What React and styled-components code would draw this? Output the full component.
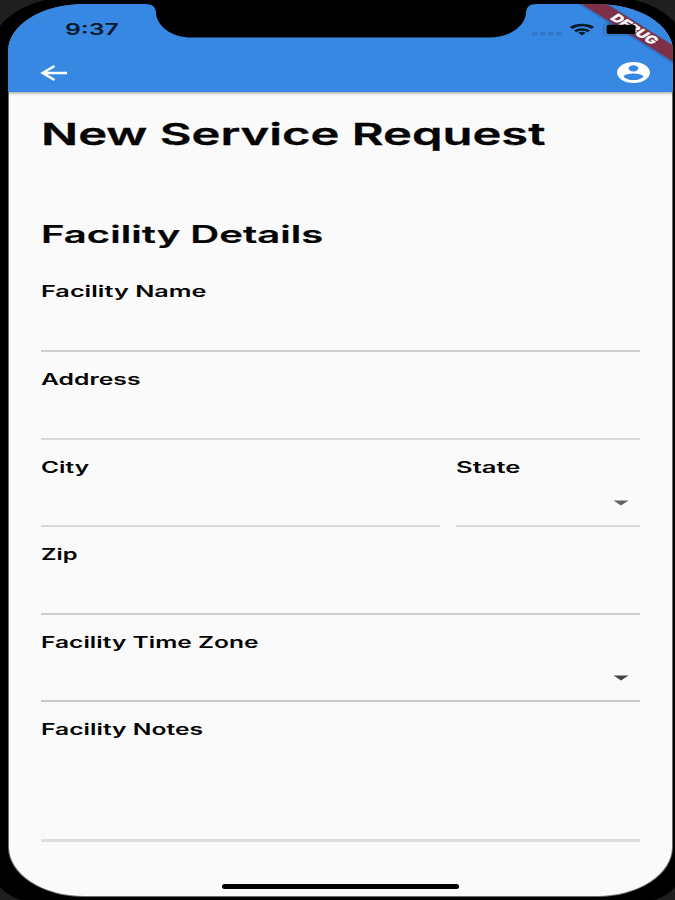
import React from "react";
import styled, { createGlobalStyle } from "styled-components";

const Global = createGlobalStyle`
  * { box-sizing: border-box; }
  body { margin: 0; background: #000; font-family: Inter, "Liberation Sans", sans-serif; color: #050505; }
`;

const Device = styled.div`
  position: relative;
  width: 675px;
  height: 900px;
  overflow: hidden;
  background: #1f1f1f;
`;

const Bezel = styled.div`
  width: 691px;
  height: 908px;
  margin: -4px -8px;
  padding: 8px 10px 7px 16px;
  background: #000;
  border-radius: 86px 80px 52px 52px / 52px 48px 36px 36px;
`;

const Screen = styled.div`
  position: relative;
  display: flex;
  flex-direction: column;
  width: 665px;
  height: 893px;
  overflow: hidden;
  background: #6c6c6c;
  border-radius: 76px / 47px 47px 50px 50px;
`;

const Header = styled.header`
  position: relative;
  flex: none;
  display: flex;
  flex-direction: column;
  height: 88px;
  background: #3788e3;
  box-shadow: 0 1px 3px rgba(0, 0, 0, 0.4);
`;

const StatusBar = styled.div`
  display: flex;
  justify-content: space-between;
  height: 49px;
  padding: 0 32px 0 57px;
`;

const AppBar = styled.div`
  display: flex;
  justify-content: space-between;
  align-items: center;
  height: 39px;
  padding: 0 23px 0 32px;
`;

const Notch = styled.svg`
  position: absolute;
  top: 0;
  left: 137px;
`;

const Overlay = styled.svg`
  position: absolute;
  top: 0;
  right: 0;
`;

const Stretch = styled.span`
  display: block;
  width: max-content;
  white-space: nowrap;
  transform: scaleX(${(p) => p.$x});
  transform-origin: 0 50%;
`;

const Clock = styled.div`
  padding-top: 15px;
  font-size: 16px;
  line-height: 21px;
  font-weight: 600;
  color: #08182b;
`;

const Main = styled.main`
  flex: 1;
  display: flex;
  flex-direction: column;
  margin: 0 1px 1px;
  padding: 0 32px;
  background: #fafafa;
  border-radius: 0 0 75px 75px / 0 0 49px 49px;
`;

const Title = styled.h1`
  margin: 24px 0 0;
  height: 100px;
  font-size: 30px;
  line-height: 37px;
  font-weight: 600;
  -webkit-text-stroke: 0.3px #050505;
`;

const Section = styled.h2`
  margin: 0;
  height: 63px;
  font-size: 24px;
  line-height: 38px;
  font-weight: 600;
  -webkit-text-stroke: 0.2px #050505;
`;

const Field = styled.label`
  display: flex;
  flex-direction: column;
  justify-content: space-between;
  height: ${(p) => p.$h || 87.6}px;
  padding-top: ${(p) => (p.$first ? 3 : 18)}px;
  border-bottom: ${(p) => p.$line || 2}px solid ${(p) => p.$tone || "#cecece"};
  font-size: 15.5px;
  line-height: 20px;
  font-weight: 600;
`;

const Row = styled.div`
  display: grid;
  grid-template-columns: 399px 184px;
  gap: 16px;
`;

const Arrow = styled.svg`
  align-self: flex-end;
  margin: 0 11px 19px 0;
`;

const HomeBar = styled.div`
  position: absolute;
  left: 214px;
  bottom: 8px;
  width: 237px;
  height: 5px;
  border-radius: 3px;
  background: #000;
`;

const Caret = ({ color }) => (
  <Arrow width="16" height="6" viewBox="0 0 16 6"><path d="M0.5 0.5H15.5L8 5.5Z" fill={color} /></Arrow>
);

export default function App() {
  return (
    <>
      <Global />
      <Device>
        <Bezel>
          <Screen>
            <Header>
              <StatusBar>
                <Clock><Stretch $x={1.55}>9:37</Stretch></Clock>
              </StatusBar>
              <AppBar>
                <svg width="27" height="18" viewBox="0 0 27 18" fill="none" stroke="#fff" strokeWidth="2.6">
                  <path d="M27 9H3M14.5 2L2.8 9L14.5 16" />
                </svg>
                <svg width="33" height="21" viewBox="2 2 20 20" preserveAspectRatio="none" fill="#fff">
                  <path d="M12 2C6.48 2 2 6.48 2 12s4.48 10 10 10 10-4.48 10-10S17.52 2 12 2zm0 3c1.66 0 3 1.34 3 3s-1.34 3-3 3-3-1.34-3-3 1.34-3 3-3zm0 14.2c-2.5 0-4.71-1.28-6-3.22.03-1.99 4-3.08 6-3.08 1.99 0 5.97 1.09 6 3.08-1.29 1.94-3.5 3.22-6 3.22z" />
                </svg>
              </AppBar>
            </Header>
            <Main>
              <Title><Stretch $x={1.63}>New Service Request</Stretch></Title>
              <Section><Stretch $x={1.67}>Facility Details</Stretch></Section>
              <Field $h={73} $first><Stretch $x={1.63}>Facility Name</Stretch></Field>
              <Field $tone="#d8d8d8"><Stretch $x={1.595}>Address</Stretch></Field>
              <Row>
                <Field $tone="#d8d8d8"><Stretch $x={1.58}>City</Stretch></Field>
                <Field $tone="#d8d8d8"><Stretch $x={1.65}>State</Stretch><Caret color="#626262" /></Field>
              </Row>
              <Field><Stretch $x={1.53}>Zip</Stretch></Field>
              <Field $tone="#c8c8c8"><Stretch $x={1.585}>Facility Time Zone</Stretch><Caret color="#444" /></Field>
              <Field $h={140} $line={3} $tone="#dedede"><Stretch $x={1.59}>Facility Notes</Stretch></Field>
            </Main>
            <Notch width="392" height="34" viewBox="0 0 392 34">
              <path d="M0 0C8 0 11 3 11 10C13 23 27 33.5 47 33.5H344C364 33.5 379 23 381 10C381 3 384 0 392 0Z" fill="#000" />
            </Notch>
            <Overlay width="145" height="60" viewBox="528 4 145 60">
              <g fill="#3077c8">
                <rect x="532" y="32" width="6" height="3.5" rx="1" /><rect x="540" y="32" width="6" height="3.5" rx="1" />
                <rect x="548" y="32" width="6" height="3.5" rx="1" /><rect x="556" y="32" width="6" height="3.5" rx="1" />
              </g>
              <g transform="translate(582 35) scale(1.5 1)" fill="none" stroke="#0a1c30" strokeWidth="2.5">
                <path d="M-7.3 -7A10.6 10.6 0 0 1 7.3 -7M-4.6 -3.7A6.8 6.8 0 0 1 4.6 -3.7" />
                <path d="M0 0.5L-2.5 -2.2A3.8 3.8 0 0 1 2.5 -2.2Z" fill="#0a1c30" stroke="none" />
              </g>
              <path d="M578 4H609L673 45V64Z" fill="#2b5188" opacity="0.35" />
              <path d="M581.5 4H606.5L673 45.5V61.5Z" fill="#7d3048" />
              <rect x="603.5" y="23.8" width="36" height="11.5" rx="3" fill="none" stroke="#1f4d82" strokeWidth="0.8" opacity="0.6" />
              <text transform="translate(630.5 32) scale(1.55 1) rotate(44)" textAnchor="middle" fontSize="11" fontWeight="900" fill="#fff">DEBUG</text>
              <rect x="606.5" y="24.7" width="29" height="9.4" rx="2" fill="#000" />
            </Overlay>
            <HomeBar />
          </Screen>
        </Bezel>
      </Device>
    </>
  );
}
